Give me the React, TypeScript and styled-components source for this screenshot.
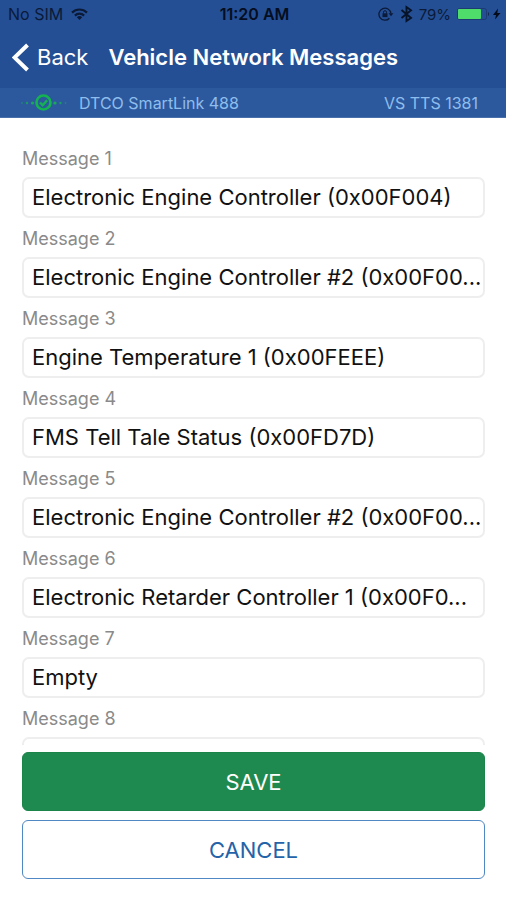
import { useState } from "react";
import styled, { createGlobalStyle } from "styled-components";

const GlobalStyle = createGlobalStyle`
  *, *::before, *::after { box-sizing: border-box; }
  body {
    margin: 0;
    background: #ffffff;
    font-family: Inter, "Liberation Sans", sans-serif;
  }
`;

const Screen = styled.div`
  display: flex;
  flex-direction: column;
  height: 100vh;
`;

const Header = styled.header`
  flex: none;
  background: #244f95;
`;

const StatusBar = styled.div`
  display: grid;
  grid-template-columns: 1fr auto 1fr;
  align-items: center;
  height: 28px;
  padding: 0 5px 0 8px;
  font-size: 15px;
  color: #0b1a38;
`;

const StatusGroup = styled.div<{ $end?: boolean }>`
  display: flex;
  align-items: center;
  justify-content: ${(p) => (p.$end ? "flex-end" : "flex-start")};
  gap: ${(p) => (p.$end ? "6px" : "8px")};
`;

const Carrier = styled.span`
  font-size: 16px;
`;

const Clock = styled.time`
  font-size: 16px;
  font-weight: 600;
  color: #050d20;
`;

const NavBar = styled.nav`
  display: flex;
  align-items: center;
  height: 60px;
  padding: 0 12px 2px;
  gap: 20px;
`;

const BackButton = styled.button`
  display: flex;
  align-items: center;
  gap: 8px;
  padding: 0;
  border: 0;
  background: none;
  color: #ffffff;
  font: inherit;
  font-size: 22px;
  cursor: pointer;
`;

const Title = styled.h1`
  margin: 0;
  color: #ffffff;
  font-size: 22px;
  font-weight: 600;
  white-space: nowrap;
`;

const DeviceBar = styled.div`
  display: flex;
  align-items: center;
  height: 30px;
  padding: 0 28px 0 20px;
  gap: 12px;
  background: #2c599e;
  border-bottom: 1px solid #4a70ac;
  color: #8fbdec;
  font-size: 16px;
`;

const VehicleName = styled.span`
  margin-left: auto;
`;

const MessageList = styled.main`
  flex: 1;
  min-height: 0;
  padding: 26px 21px 0 22px;
  overflow-y: auto;
  scrollbar-width: none;
`;

const Field = styled.div`
  display: flex;
  flex-direction: column;
  height: 80px;
`;

const FieldLabel = styled.label`
  height: 33px;
  line-height: 30px;
  color: #8a8a8a;
  font-size: 18px;
`;

const FieldInput = styled.input`
  width: 100%;
  height: 41px;
  padding: 0 0 2px 8px;
  border: 2px solid #eeeeee;
  border-radius: 7px;
  outline: 0;
  background: #ffffff;
  color: #111111;
  font: inherit;
  font-size: 22px;
  text-overflow: ellipsis;
`;

const Actions = styled.footer`
  flex: none;
  display: flex;
  flex-direction: column;
  gap: 9px;
  padding: 7px 21px 21px 22px;
`;

const ActionButton = styled.button<{ $primary?: boolean }>`
  height: 59px;
  border: 1px solid ${(p) => (p.$primary ? "#1a8449" : "#4f88c2")};
  border-radius: 6px;
  background: ${(p) => (p.$primary ? "#1f8a50" : "#ffffff")};
  color: ${(p) => (p.$primary ? "#ffffff" : "#2463a8")};
  font: inherit;
  font-size: 22px;
  cursor: pointer;
`;

const WifiIcon = () => (
  <svg width="17" height="12" viewBox="0 0 17 12" fill="none" stroke="#0b1a38" strokeWidth="2.2" aria-hidden="true">
    <path d="M1 4.6a10.6 10.6 0 0 1 15 0" />
    <path d="M3.9 7.6a6.5 6.5 0 0 1 9.2 0" />
    <path d="M8.5 12 5.8 9.3a3.8 3.8 0 0 1 5.4 0z" fill="#0b1a38" stroke="none" />
  </svg>
);

const RotationLockIcon = () => (
  <svg width="16" height="14" viewBox="0 0 16 14" fill="none" stroke="#0b1a38" strokeWidth="1.3" aria-hidden="true">
    <path d="M11.4 11.2A6 6 0 1 1 12.9 6.4" />
    <path d="M10.6 6.2h4.8L13 9.2z" fill="#0b1a38" stroke="none" />
    <rect x="4.5" y="6.3" width="5" height="3.8" fill="#0b1a38" stroke="none" />
    <path d="M5.5 6.5V5.2a1.5 1.5 0 0 1 3 0v1.3" strokeWidth="1" />
  </svg>
);

const BluetoothIcon = () => (
  <svg width="13" height="18" viewBox="0 0 13 18" fill="none" stroke="#071329" strokeWidth="1.9" aria-hidden="true">
    <path d="M1.5 5l9.5 8L6.5 16v-14L11 5.2 1.5 13" />
  </svg>
);

const BatteryIcon = () => (
  <svg width="44" height="14" viewBox="0 0 44 14" aria-hidden="true">
    <rect x="0.5" y="1.5" width="29" height="11" rx="2" fill="none" stroke="#1d3b70" />
    <rect x="1" y="2" width="23" height="10" rx="1" fill="#4fdc6a" />
    <path d="M31 5a2.4 2.4 0 0 1 0 4z" fill="#12294f" />
    <path d="M41 1.5 36 8h3l-1 4.5L43.5 6h-3.2z" fill="#040b1a" />
  </svg>
);

const BackIcon = () => (
  <svg width="17" height="29" viewBox="0 0 17 29" fill="none" stroke="#ffffff" strokeWidth="4" aria-hidden="true">
    <path d="M15.5 2 2.5 14.5 15.5 27" />
  </svg>
);

const LinkIcon = () => (
  <svg width="47" height="18" viewBox="0 0 47 18" fill="none" aria-hidden="true">
    <g fill="#18ab55">
      <circle cx="2" cy="9" r="0.9" opacity="0.5" />
      <circle cx="7" cy="9" r="1.2" opacity="0.8" />
      <circle cx="12.5" cy="9" r="1.6" />
      <circle cx="35" cy="9" r="1.6" />
      <circle cx="40.5" cy="9" r="1.2" opacity="0.8" />
      <circle cx="45.5" cy="9" r="0.9" opacity="0.5" />
    </g>
    <circle cx="23.5" cy="8.5" r="7" stroke="#14b251" strokeWidth="2.6" />
    <path d="M20 8.5l2.7 2.7 4.5-5" stroke="#14b251" strokeWidth="2.4" />
  </svg>
);

const INITIAL_MESSAGES = [
  "Electronic Engine Controller (0x00F004)",
  "Electronic Engine Controller #2 (0x00F00...",
  "Engine Temperature 1 (0x00FEEE)",
  "FMS Tell Tale Status (0x00FD7D)",
  "Electronic Engine Controller #2 (0x00F00...",
  "Electronic Retarder Controller 1 (0x00F0...",
  "Empty",
  "",
];

export default function App() {
  const [messages, setMessages] = useState(INITIAL_MESSAGES);

  const update = (index: number, value: string) =>
    setMessages((current) => current.map((m, i) => (i === index ? value : m)));

  return (
    <Screen>
      <GlobalStyle />
      <Header>
        <StatusBar>
          <StatusGroup>
            <Carrier>No SIM</Carrier>
            <WifiIcon />
          </StatusGroup>
          <Clock>11:20 AM</Clock>
          <StatusGroup $end>
            <RotationLockIcon />
            <BluetoothIcon />
            <span>79%</span>
            <BatteryIcon />
          </StatusGroup>
        </StatusBar>
        <NavBar>
          <BackButton type="button">
            <BackIcon />
            Back
          </BackButton>
          <Title>Vehicle Network Messages</Title>
        </NavBar>
        <DeviceBar>
          <LinkIcon />
          <span>DTCO SmartLink 488</span>
          <VehicleName>VS TTS 1381</VehicleName>
        </DeviceBar>
      </Header>
      <MessageList>
        {messages.map((message, index) => (
          <Field key={index}>
            <FieldLabel htmlFor={`message-${index + 1}`}>Message {index + 1}</FieldLabel>
            <FieldInput
              id={`message-${index + 1}`}
              type="text"
              value={message}
              onChange={(event) => update(index, event.target.value)}
            />
          </Field>
        ))}
      </MessageList>
      <Actions>
        <ActionButton type="button" $primary>
          SAVE
        </ActionButton>
        <ActionButton type="button">CANCEL</ActionButton>
      </Actions>
    </Screen>
  );
}
